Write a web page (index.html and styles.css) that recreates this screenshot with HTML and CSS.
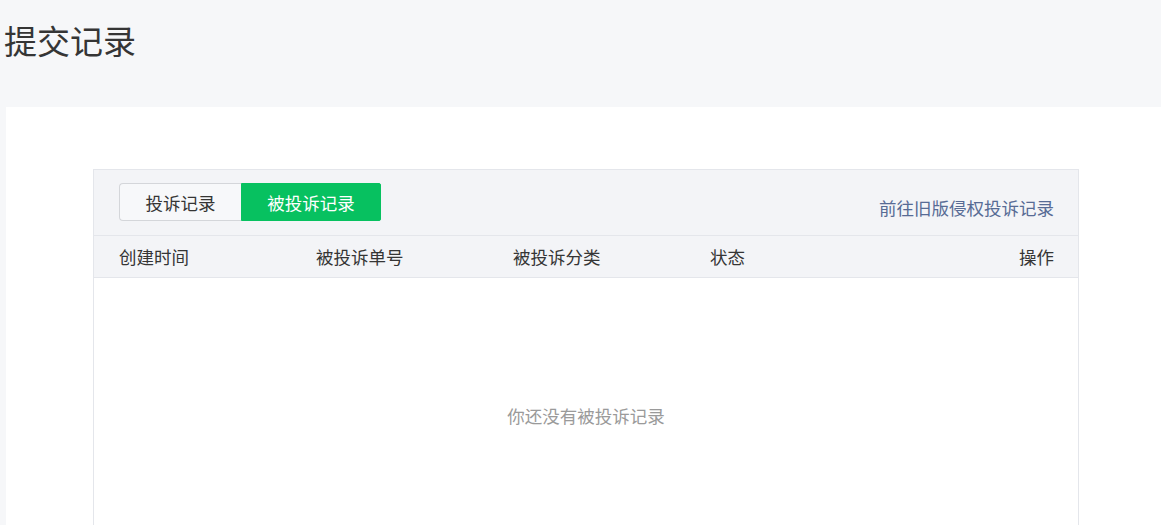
FILE: index.html
```html
<!DOCTYPE html>
<html lang="zh-CN">
<head>
    <meta charset="UTF-8">
    <title>提交记录</title>
    <link rel="stylesheet" href="styles.css">
</head>
<body>
    <div class="page-header">
        <h1>提交记录</h1>
    </div>

    <div class="card">
        <div class="record-table">
            <div class="toolbar">
                <div class="tabs">
                    <button class="tab">投诉记录</button>
                    <button class="tab active">被投诉记录</button>
                </div>
                <a class="old-link" href="#">前往旧版侵权投诉记录</a>
            </div>
            <div class="table-head">
                <div class="col">创建时间</div>
                <div class="col">被投诉单号</div>
                <div class="col">被投诉分类</div>
                <div class="col">状态</div>
                <div class="col col-op">操作</div>
            </div>
            <div class="table-body">
                <div class="empty">你还没有被投诉记录</div>
            </div>
        </div>
    </div>
</body>
</html>
```

FILE: styles.css
```css
body {
    margin: 0;
    background-color: #f6f7f9;
    font-family: "Noto Sans CJK SC", "Microsoft YaHei", sans-serif;
    color: #353535;
}

.page-header {
    height: 107px;
    padding-left: 4px;
    box-sizing: border-box;
}

.page-header h1 {
    margin: 0;
    padding-top: 20px;
    font-size: 33px;
    line-height: 40px;
    font-weight: normal;
    color: #353535;
}

.card {
    margin-left: 6px;
    padding: 62px 0 0 87px;
    min-height: 418px;
    box-sizing: border-box;
    background-color: #fff;
}

.record-table {
    width: 986px;
    min-height: 360px;
    border: 1px solid #e4e6eb;
    border-bottom: none;
    box-sizing: border-box;
}

.toolbar {
    display: flex;
    justify-content: space-between;
    align-items: flex-end;
    height: 66px;
    padding: 13px 24px 0 25px;
    box-sizing: border-box;
    background-color: #f3f4f7;
    border-bottom: 1px solid #e4e6eb;
}

.tabs {
    display: flex;
    align-self: flex-start;
}

.tab {
    height: 38px;
    padding: 0;
    font-family: inherit;
    font-size: 17.5px;
    color: #353535;
    background-color: #f7f8fa;
    border: 1px solid #d4d6da;
    cursor: pointer;
}

.tab:first-child {
    width: 122px;
    border-radius: 4px 0 0 4px;
    border-right: none;
}

.tab.active {
    width: 140px;
    color: #fff;
    background-color: #07c160;
    border-color: #07c160;
    border-radius: 0 2px 2px 0;
}

.old-link {
    margin-bottom: 16px;
    font-size: 17.5px;
    line-height: 22px;
    color: #576b95;
    text-decoration: none;
}

.table-head {
    display: flex;
    height: 41px;
    padding: 0 24px 0 25px;
    align-items: center;
    background-color: #f3f4f7;
    border-bottom: 1px solid #e4e6eb;
    font-size: 17.5px;
    color: #353535;
}

.col {
    width: 197px;
}

.col-op {
    flex: 1;
    text-align: right;
}

.table-body {
    padding-top: 127px;
    text-align: center;
}

.empty {
    font-size: 17.5px;
    line-height: 22px;
    color: #9a9a9a;
}
```
